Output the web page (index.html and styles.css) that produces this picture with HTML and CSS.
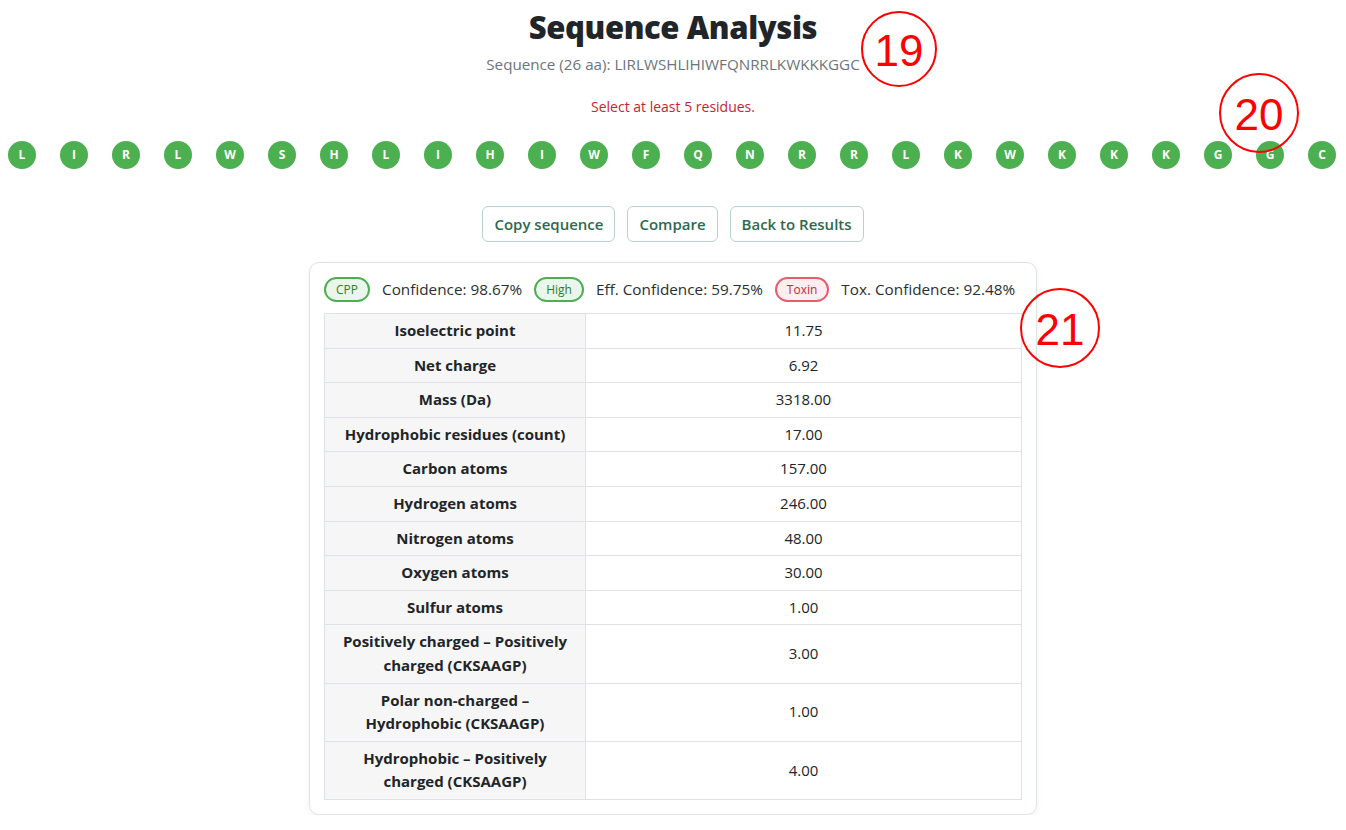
FILE: index.html
```html
<!DOCTYPE html>
<html>
<head>
<meta charset="utf-8">
<link rel="stylesheet" href="styles.css">
</head>
<body>
<div class="page">
  <h1 class="title">Sequence Analysis</h1>
  <p class="subtitle">Sequence (26 aa): LIRLWSHLIHIWFQNRRLKWKKKGGC</p>
  <p class="warn">Select at least 5 residues.</p>
  <div class="residues">
    <span class="res">L</span><span class="res">I</span><span class="res">R</span><span class="res">L</span><span class="res">W</span><span class="res">S</span><span class="res">H</span><span class="res">L</span><span class="res">I</span><span class="res">H</span><span class="res">I</span><span class="res">W</span><span class="res">F</span><span class="res">Q</span><span class="res">N</span><span class="res">R</span><span class="res">R</span><span class="res">L</span><span class="res">K</span><span class="res">W</span><span class="res">K</span><span class="res">K</span><span class="res">K</span><span class="res">G</span><span class="res">G</span><span class="res">C</span>
  </div>
  <div class="actions">
    <button class="btn">Copy sequence</button>
    <button class="btn">Compare</button>
    <button class="btn">Back to Results</button>
  </div>
  <div class="card">
    <div class="card-head">
      <span class="badge badge-green">CPP</span>
      <span class="conf">Confidence: 98.67%</span>
      <span class="badge badge-green">High</span>
      <span class="conf">Eff. Confidence: 59.75%</span>
      <span class="badge badge-red">Toxin</span>
      <span class="conf">Tox. Confidence: 92.48%</span>
    </div>
    <table class="props">
      <tr><th>Isoelectric point</th><td>11.75</td></tr>
      <tr><th>Net charge</th><td>6.92</td></tr>
      <tr><th>Mass (Da)</th><td>3318.00</td></tr>
      <tr><th>Hydrophobic residues (count)</th><td>17.00</td></tr>
      <tr><th>Carbon atoms</th><td>157.00</td></tr>
      <tr><th>Hydrogen atoms</th><td>246.00</td></tr>
      <tr><th>Nitrogen atoms</th><td>48.00</td></tr>
      <tr><th>Oxygen atoms</th><td>30.00</td></tr>
      <tr><th>Sulfur atoms</th><td>1.00</td></tr>
      <tr><th>Positively charged – Positively charged (CKSAAGP)</th><td>3.00</td></tr>
      <tr><th>Polar non-charged – Hydrophobic (CKSAAGP)</th><td>1.00</td></tr>
      <tr><th>Hydrophobic – Positively charged (CKSAAGP)</th><td>4.00</td></tr>
    </table>
  </div>
</div>
<div class="mark mark-19">19</div>
<div class="mark mark-20">20</div>
<div class="mark mark-21">21</div>
</body>
</html>
```
FILE: styles.css
```css
html, body {
  margin: 0;
  padding: 0;
  background: #fff;
}
body {
  font-family: "Open Sans", "Noto Sans", sans-serif;
  color: #212529;
  padding: 0 8px;
}
.page {
  text-align: center;
}
.title {
  font-size: 31px;
  font-weight: 800;
  letter-spacing: -0.4px;
  line-height: 38px;
  margin: 8px 0 0;
  color: #212529;
}
.subtitle {
  font-size: 15.2px;
  color: #6c757d;
  line-height: 22px;
  margin: 7px 0 0;
}
.warn {
  font-size: 14px;
  color: #c82333;
  line-height: 20px;
  margin: 22px 0 0;
}
.residues {
  display: flex;
  justify-content: space-between;
  margin-top: 24px;
  padding-right: 2px;
}
.res {
  width: 28px;
  height: 28px;
  border-radius: 50%;
  background: #4caf50;
  color: #fff;
  font-size: 12px;
  font-weight: 700;
  line-height: 28px;
  text-align: center;
}
.actions {
  display: flex;
  justify-content: center;
  gap: 12px;
  margin-top: 37px;
}
.btn {
  font-family: inherit;
  font-size: 15px;
  font-weight: 600;
  color: #2d6a4f;
  background: #fff;
  border: 1px solid #b8d4c6;
  border-radius: 6px;
  height: 36px;
  padding: 0 11px;
}
.card {
  width: 698px;
  margin: 20px auto 0;
  border: 1px solid #dde3e1;
  border-radius: 10px;
  box-shadow: 0 2px 6px rgba(0,0,0,0.06);
  padding: 13px 14px 14px;
  text-align: left;
}
.card-head {
  display: flex;
  align-items: center;
  gap: 12px;
  height: 26px;
  margin-bottom: 11px;
  white-space: nowrap;
}
.badge {
  flex-shrink: 0;
  font-size: 12px;
  line-height: 21px;
  padding: 0 10px;
  border-radius: 13px;
  border: 2px solid;
}
.badge-green {
  color: #2e7d32;
  background: #eaf6ec;
  border-color: #4caf50;
}
.badge-red {
  color: #c62836;
  background: #fdeef0;
  border-color: #e35d6a;
}
.conf {
  flex-shrink: 0;
  font-size: 15.3px;
  color: #2b2f33;
}
.props {
  width: 100%;
  border-collapse: collapse;
  font-size: 15px;
  line-height: 23.6px;
}
.props th, .props td {
  border: 1px solid #dee2e6;
  padding: 5px 12px;
  text-align: center;
}
.props th {
  width: 236px;
  background: #f6f6f6;
  font-weight: 700;
  color: #212529;
}
.props td {
  color: #212529;
}
.mark {
  position: absolute;
  width: 76px;
  height: 76px;
  border: 2.5px solid #ff0000;
  border-radius: 50%;
  color: #ff0000;
  font-family: "Liberation Sans", Arial, sans-serif;
  font-size: 44px;
  line-height: 76px;
  text-align: center;
  box-sizing: border-box;
}
.mark-19 { left: 861px; top: 11px; }
.mark-20 { left: 1219px; top: 73px; width: 80px; height: 80px; line-height: 80px; }
.mark-21 { left: 1020px; top: 288px; width: 80px; height: 80px; line-height: 80px; }
```
